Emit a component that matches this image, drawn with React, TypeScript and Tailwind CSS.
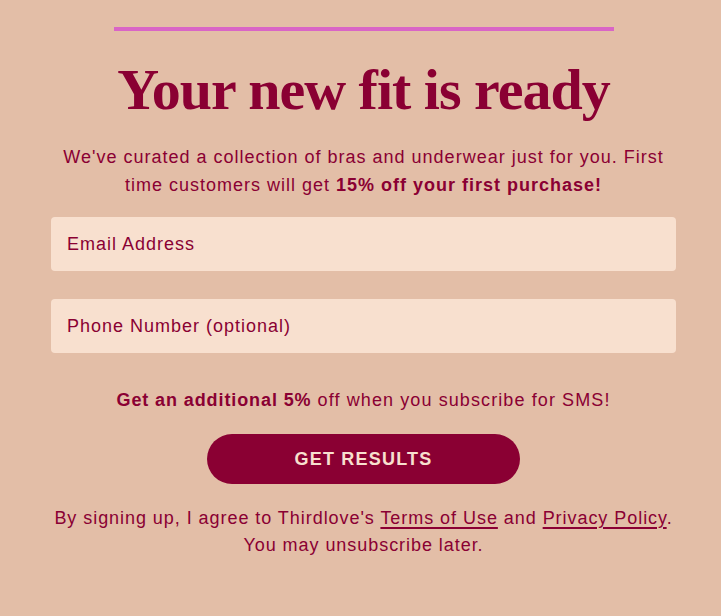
export default function App() {
  return (
    <div className="w-[721px] h-[616px] bg-[#e3bea7] flex flex-col items-center pl-[6px] text-[#8a0033]" style={{ fontFamily: '"Liberation Sans", Arial, sans-serif' }}>
      <div className="mt-[27px] w-[500px] h-[4px] bg-[#d965c6]" />
      <h1 className="mt-[27px] text-[58px] leading-[64px] font-bold tracking-[-1px]" style={{ fontFamily: '"Liberation Serif", "Times New Roman", serif' }}>
        Your new fit is ready
      </h1>
      <p className="mt-[21px] w-[640px] text-center text-[18px] leading-[28px] tracking-[1px]">
        We've curated a collection of bras and underwear just for you. First time customers will get <span className="font-bold tracking-[1px]">15% off your first purchase!</span>
      </p>
      <div className="mt-[18px] w-[625px] flex flex-col gap-[28px]">
        <div className="h-[54px] rounded-[4px] bg-[#f8e0cf] flex items-center px-[16px] text-[18px] tracking-[1px]">Email Address</div>
        <div className="h-[54px] rounded-[4px] bg-[#f8e0cf] flex items-center px-[16px] text-[18px] tracking-[1px]">Phone Number (optional)</div>
      </div>
      <p className="mt-[33px] text-[18px] leading-[28px] tracking-[1.1px]">
        <span className="font-bold tracking-[0.9px]">Get an additional 5%</span> off when you subscribe for SMS!
      </p>
      <button className="mt-[20px] w-[313px] h-[50px] rounded-full bg-[#8a0033] text-[#f8e0cf] text-[18px] font-bold tracking-[1.2px]">
        GET RESULTS
      </button>
      <p className="mt-[21px] w-[640px] text-center text-[18px] leading-[27px] tracking-[0.95px]">
        By signing up, I agree to Thirdlove's <span className="underline decoration-[1.5px] underline-offset-[3px]">Terms of Use</span> and <span className="underline decoration-[1.5px] underline-offset-[3px]">Privacy Policy</span>.<br />You may unsubscribe later.
      </p>
    </div>
  );
}
